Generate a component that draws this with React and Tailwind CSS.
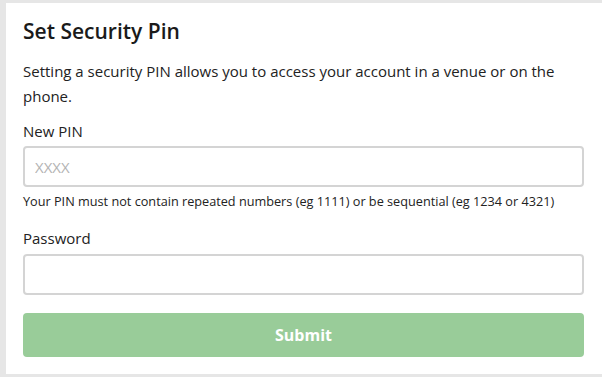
export default function App() {
  return (
    <div className="w-[602px] h-[377px] bg-[#e6e6e6] pt-[3px] pl-[6px] overflow-hidden" style={{ fontFamily: '"Open Sans", sans-serif' }}>
      <div className="bg-white h-[371px] pl-[17px] pr-[18px] pt-[14px] text-[#222]">
        <h1 className="text-[21px] leading-[28px] font-semibold text-[#1a1a1a]">Set Security Pin</h1>
        <p className="mt-[14px] text-[15px] leading-[25px]">
          Setting a security PIN allows you to access your account in a venue or on the phone.
        </p>
        <label className="block mt-[11px] text-[15px] leading-[22px]">New PIN</label>
        <input
          className="mt-[4px] block w-full h-[41px] border-2 border-[#d4d4d4] rounded-[4px] px-[10px] text-[15px] placeholder:text-[#b3b3b3] outline-none"
          placeholder="XXXX"
          style={{ fontFamily: '"Open Sans", sans-serif' }}
        />
        <p className="mt-[5px] text-[12.7px] leading-[18px]">
          Your PIN must not contain repeated numbers (eg 1111) or be sequential (eg 1234 or 4321)
        </p>
        <label className="block mt-[17px] text-[15px] leading-[22px]">Password</label>
        <input
          type="password"
          className="mt-[5px] block w-full h-[41px] border-2 border-[#d4d4d4] rounded-[4px] px-[10px] text-[15px] outline-none"
        />
        <button className="mt-[18px] block w-full h-[44px] rounded-[4px] bg-[#99cc99] text-white text-[16px] font-bold" style={{ fontFamily: '"Open Sans", sans-serif' }}>
          Submit
        </button>
      </div>
    </div>
  );
}
